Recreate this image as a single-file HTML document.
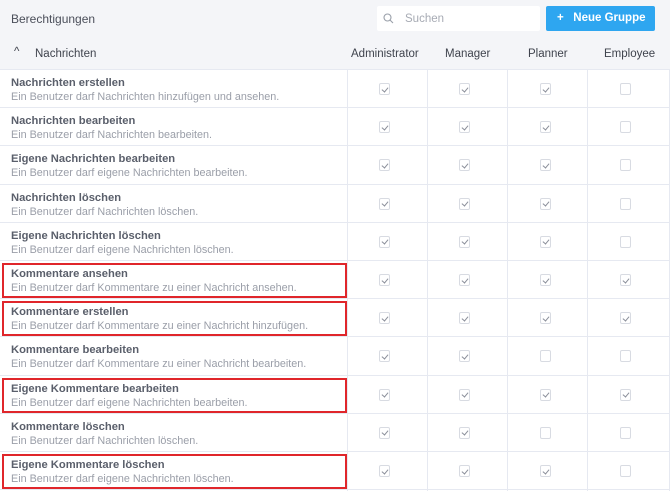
<!DOCTYPE html>
<html><head><meta charset="utf-8"><style>
*{box-sizing:border-box;margin:0;padding:0}
body{width:670px;height:491px;background:#fff;font-family:"Liberation Sans",sans-serif;position:relative;overflow:hidden}
.top{position:absolute;left:0;top:0;width:670px;height:36px;background:#f4f5f8}
.top .t{position:absolute;left:11px;top:12px;font-size:12px;color:#4b4f5a}
.search{position:absolute;left:377px;top:6px;width:163px;height:25px;background:#fff;border-radius:2px}
.search span{position:absolute;left:28px;top:7px;font-size:11.5px;color:#a7abb4}
.btn{position:absolute;left:546px;top:6px;width:109px;height:25px;background:#2ea6f0;border-radius:2px;color:#fff;font-size:11.5px;font-weight:bold}
.btn span{position:absolute;left:11px;top:6px;white-space:nowrap}
.hdr{position:absolute;left:0;top:36px;width:670px;height:34px;background:#f4f5f8;border-bottom:1px solid #e6e9f1}
.hdr div{position:absolute;top:12px;font-size:11.5px;color:#3f434d}
.row{position:absolute;left:0;width:670px;border-bottom:1px solid #e6e9f1;background:#fff}
.row .a{position:absolute;left:11px;top:7px;font-size:11.2px;font-weight:bold;color:#5a5f6b;white-space:nowrap}
.row .b{position:absolute;left:11px;top:21px;font-size:10.8px;color:#9a9ea8;white-space:nowrap}
.vl{position:absolute;top:70px;height:421px;width:1px;background:#e6e9f1}
.cb{position:absolute;width:11px;height:12px;border:1px solid #d8dbe2;border-radius:2px;background:#fff}
.cb.c::after{content:"";position:absolute;left:3px;top:1.5px;width:3px;height:5px;border-right:1px solid #8a8e99;border-bottom:1px solid #8a8e99;transform:rotate(40deg)}
.red{position:absolute;left:2px;width:345px;border:2px solid #e0262b}
</style></head><body>
<div class="top"><div class="t">Berechtigungen</div>
<div class="search"><svg style="position:absolute;left:6px;top:7px" width="11" height="11" viewBox="0 0 11 11"><circle cx="4.5" cy="4.5" r="3.5" fill="none" stroke="#9aa0aa" stroke-width="1.1"/><line x1="7" y1="7" x2="10" y2="10" stroke="#9aa0aa" stroke-width="1.1"/></svg><span>Suchen</span></div>
<div class="btn"><span>+&nbsp;&nbsp; Neue Gruppe</span></div></div>
<div class="hdr">
<div style="left:14px;top:10px">^</div><div style="left:35px">Nachrichten</div>
<div style="left:351px">Administrator</div><div style="left:445px">Manager</div><div style="left:528px">Planner</div><div style="left:604px">Employee</div>
</div>
<div id="rows"></div>
<script>
var d=[["Nachrichten erstellen","Ein Benutzer darf Nachrichten hinzufügen und ansehen.","1110"],
["Nachrichten bearbeiten","Ein Benutzer darf Nachrichten bearbeiten.","1110"],
["Eigene Nachrichten bearbeiten","Ein Benutzer darf eigene Nachrichten bearbeiten.","1110"],
["Nachrichten löschen","Ein Benutzer darf Nachrichten löschen.","1110"],
["Eigene Nachrichten löschen","Ein Benutzer darf eigene Nachrichten löschen.","1110"],
["Kommentare ansehen","Ein Benutzer darf Kommentare zu einer Nachricht ansehen.","1111"],
["Kommentare erstellen","Ein Benutzer darf Kommentare zu einer Nachricht hinzufügen.","1111"],
["Kommentare bearbeiten","Ein Benutzer darf Kommentare zu einer Nachricht bearbeiten.","1100"],
["Eigene Kommentare bearbeiten","Ein Benutzer darf eigene Nachrichten bearbeiten.","1111"],
["Kommentare löschen","Ein Benutzer darf Nachrichten löschen.","1100"],
["Eigene Kommentare löschen","Ein Benutzer darf eigene Nachrichten löschen.","1110"]];
var red=[5,6,8,10],cx=[385,465,546,626],h="";
for(var i=0;i<11;i++){var t=70+i*38.2;
h+='<div class="row" style="top:'+t+'px;height:38.2px"><div class="a">'+d[i][0]+'</div><div class="b">'+d[i][1]+'</div></div>';
for(var j=0;j<4;j++)h+='<div class="cb'+(d[i][2][j]=="1"?" c":"")+'" style="left:'+(cx[j]-6)+'px;top:'+(t+13)+'px"></div>';
if(red.indexOf(i)>=0)h+='<div class="red" style="top:'+(t+2)+'px;height:'+35+'px"></div>';}
[347,427,507,587,669].forEach(function(x){h+='<div class="vl" style="left:'+x+'px"></div>'});
document.getElementById("rows").innerHTML=h;
</script>
</body></html>
